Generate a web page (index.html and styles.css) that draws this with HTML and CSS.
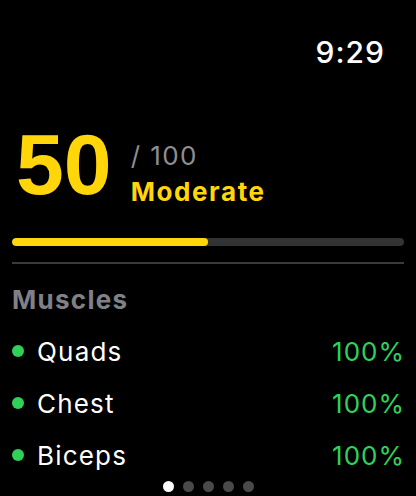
FILE: index.html
```html
<!DOCTYPE html>
<html>
<head>
<meta charset="utf-8">
<link rel="stylesheet" href="styles.css">
</head>
<body>
<div class="screen">
  <div class="status"><span class="time">9:29</span></div>
  <div class="score">
    <div class="value">50</div>
    <div class="meta">
      <div class="max">/ 100</div>
      <div class="level">Moderate</div>
    </div>
  </div>
  <div class="bar"><div class="fill" style="width:50%"></div></div>
  <div class="divider"></div>
  <div class="section">Muscles</div>
  <ul class="list">
    <li class="row"><span class="dot"></span><span class="name">Quads</span><span class="pct">100%</span></li>
    <li class="row"><span class="dot"></span><span class="name">Chest</span><span class="pct">100%</span></li>
    <li class="row"><span class="dot"></span><span class="name">Biceps</span><span class="pct">100%</span></li>
  </ul>
  <div class="pager">
    <span class="pdot active"></span>
    <span class="pdot"></span>
    <span class="pdot"></span>
    <span class="pdot"></span>
    <span class="pdot"></span>
  </div>
</div>
</body>
</html>
```
FILE: styles.css
```css
html, body {
  margin: 0;
  padding: 0;
  background: #000;
}
.screen {
  position: relative;
  width: 416px;
  height: 496px;
  overflow: hidden;
  box-sizing: border-box;
  padding: 0 12px;
  display: flex;
  flex-direction: column;
  font-family: Inter, "Liberation Sans", sans-serif;
  color: #fff;
}
.status {
  display: flex;
  justify-content: flex-end;
  padding-right: 20px;
  margin-top: 37px;
}
.time {
  font-size: 30px;
  line-height: 30px;
  font-weight: 500;
  letter-spacing: 1px;
  margin-right: -1px;
  color: #fff;
}
.score {
  display: flex;
  align-items: flex-start;
  margin-top: 54px;
  padding-left: 4px;
}
.value {
  font-family: "Liberation Sans", Arial, sans-serif;
  font-size: 86px;
  line-height: 86px;
  font-weight: 700;
  color: #ffd60a;
}
.meta {
  margin-top: 17px;
  margin-left: 19px;
  display: flex;
  flex-direction: column;
}
.max {
  font-size: 26px;
  line-height: 36px;
  letter-spacing: 1.4px;
  color: #8e8e93;
}
.level {
  font-size: 26px;
  line-height: 36px;
  font-weight: 700;
  letter-spacing: 1.6px;
  color: #ffd60a;
}
.bar {
  margin-top: 28px;
  height: 8px;
  border-radius: 4px;
  background: #333335;
  overflow: hidden;
}
.fill {
  height: 100%;
  background: #ffd60a;
  border-radius: 4px;
}
.divider {
  margin-top: 16px;
  height: 2px;
  background: #3a3a3c;
}
.section {
  margin-top: 18px;
  font-size: 26px;
  line-height: 36px;
  font-weight: 700;
  letter-spacing: 1.3px;
  color: #808085;
}
.list {
  list-style: none;
  margin: 8px 0 0;
  padding: 0;
}
.row {
  display: flex;
  align-items: center;
  height: 52px;
  font-size: 26px;
  line-height: 52px;
  letter-spacing: 1.2px;
}
.dot {
  width: 12px;
  height: 12px;
  border-radius: 50%;
  background: #30d158;
  margin-right: 13px;
  margin-top: -2px;
}
.name {
  flex: 1;
  color: #fff;
}
.pct {
  color: #30d158;
  letter-spacing: 1px;
  margin-right: -1px;
}
.pager {
  position: absolute;
  left: 0;
  right: 0;
  bottom: 4px;
  display: flex;
  justify-content: center;
  gap: 9px;
}
.pdot {
  width: 11px;
  height: 11px;
  border-radius: 50%;
  background: #4a4a4a;
}
.pdot.active {
  background: #fff;
}
```
